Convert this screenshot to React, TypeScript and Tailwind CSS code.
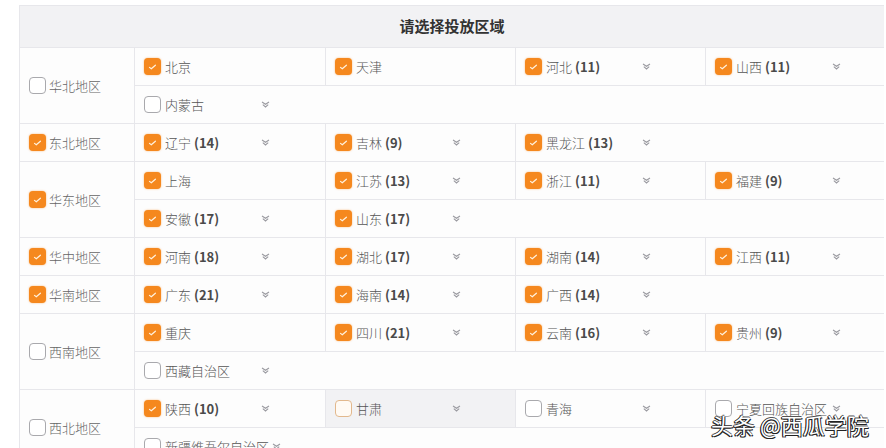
import React from "react";

type Item = { name: string; count?: number; checked: boolean; chevron: boolean; hover?: boolean };
type Region = { name: string; checked: boolean; rows: Item[][] };

const I = (name: string, count?: number, checked = true, chevron?: boolean, hover?: boolean): Item => ({
  name,
  count,
  checked,
  chevron: chevron ?? count !== undefined,
  hover,
});

const regions: Region[] = [
  {
    name: "华北地区",
    checked: false,
    rows: [
      [I("北京"), I("天津"), I("河北", 11), I("山西", 11)],
      [I("内蒙古", undefined, false, true)],
    ],
  },
  { name: "东北地区", checked: true, rows: [[I("辽宁", 14), I("吉林", 9), I("黑龙江", 13)]] },
  {
    name: "华东地区",
    checked: true,
    rows: [
      [I("上海"), I("江苏", 13), I("浙江", 11), I("福建", 9)],
      [I("安徽", 17), I("山东", 17)],
    ],
  },
  { name: "华中地区", checked: true, rows: [[I("河南", 18), I("湖北", 17), I("湖南", 14), I("江西", 11)]] },
  { name: "华南地区", checked: true, rows: [[I("广东", 21), I("海南", 14), I("广西", 14)]] },
  {
    name: "西南地区",
    checked: false,
    rows: [
      [I("重庆"), I("四川", 21), I("云南", 16), I("贵州", 9)],
      [I("西藏自治区", undefined, false, true)],
    ],
  },
  {
    name: "西北地区",
    checked: false,
    rows: [
      [
        I("陕西", 10),
        I("甘肃", undefined, false, true, true),
        I("青海", undefined, false, true),
        I("宁夏回族自治区", undefined, false, true),
      ],
      [I("新疆维吾尔自治区", undefined, false, true)],
    ],
  },
];

function Box({ checked, hover }: { checked: boolean; hover?: boolean }) {
  if (checked) {
    return (
      <span className="flex h-[17px] w-[17px] shrink-0 items-center justify-center rounded-[4px] bg-[#f5881e] shadow-[0_0_2px_rgba(245,136,30,0.6)]">
        <svg width="9" height="7" viewBox="0 0 9 7">
          <path d="M1.5 4.4 L3.3 5.8 L7.4 2.2" fill="none" stroke="#fff2df" strokeWidth="1.2" strokeLinecap="round" strokeLinejoin="round" />
        </svg>
      </span>
    );
  }
  return (
    <span
      className={
        hover
          ? "h-[17px] w-[17px] shrink-0 rounded-[4px] border border-[#e2b88d] bg-[#fffaf4]"
          : "h-[17px] w-[17px] shrink-0 rounded-[4px] border border-[#a9a9ad] bg-white"
      }
    />
  );
}

function Chevron() {
  return (
    <svg width="9" height="7" viewBox="0 0 9 7" className="shrink-0">
      <path d="M1 1 L4.5 3.3 L8 1" fill="none" stroke="#9a9aa0" strokeWidth="1.1" />
      <path d="M1.8 3.6 L4.5 6 L7.2 3.6" fill="none" stroke="#9a9aa0" strokeWidth="1.1" />
    </svg>
  );
}

function Cell({ item, first }: { item: Item; first: boolean }) {
  return (
    <div
      className={
        "flex h-full items-center overflow-visible pl-[9px] " +
        (first ? "" : "border-l border-[#e7e7eb] ") +
        (item.hover ? "bg-[#f2f2f4]" : "")
      }
    >
      <Box checked={item.checked} hover={item.hover} />
      <span className="ml-[4px] min-w-[96px] shrink-0 whitespace-nowrap pr-[3px] text-[13px] font-light text-[#555]">
        {item.name}
        {item.count !== undefined && (
          <span className="font-semibold text-[#4a4a4a]"> ({item.count})</span>
        )}
      </span>
      {item.chevron && <Chevron />}
    </div>
  );
}

export default function App() {
  return (
    <div
      className="relative h-[448px] w-[886px] overflow-hidden bg-white"
      style={{ fontFamily: '"Noto Sans CJK SC", "Noto Sans", sans-serif' }}
    >
      <div className="ml-[19px] mt-[5px] w-[865px] border-l border-t border-[#e7e7eb] bg-[#fdfdfd]">
        <div className="flex h-[42px] items-center justify-center border-b border-[#e7e7eb] bg-[#f2f2f4] text-[15px] font-bold text-[#333]">
          请选择投放区域
        </div>
        {regions.map((r) => (
          <div key={r.name} className="flex border-b border-[#e7e7eb]">
            <div className="flex w-[115px] shrink-0 items-center border-r border-[#e7e7eb] pl-[9px]">
              <Box checked={r.checked} />
              <span className="ml-[3px] text-[13px] font-light text-[#666]">{r.name}</span>
            </div>
            <div className="flex flex-1 flex-col">
              {r.rows.map((row, i) => {
                const last = i === r.rows.length - 1;
                return (
                  <div
                    key={i}
                    className={
                      last
                        ? "grid h-[37px] grid-cols-[190px_190px_190px_1fr]"
                        : "grid h-[38px] grid-cols-[190px_190px_190px_1fr] border-b border-[#e7e7eb]"
                    }
                  >
                    {row.map((it, j) => (
                      <Cell key={it.name} item={it} first={j === 0} />
                    ))}
                  </div>
                );
              })}
            </div>
          </div>
        ))}
      </div>
      <div
        className="absolute left-[711px] top-[413px] whitespace-nowrap text-[22px] leading-none text-white"
        style={{ textShadow: "-1px 1px 0 #222, 1px 1px 0 #222, -1px 0 0 #222, 0 -1px 0 #555" }}
      >
        头条 @西瓜学院
      </div>
    </div>
  );
}
